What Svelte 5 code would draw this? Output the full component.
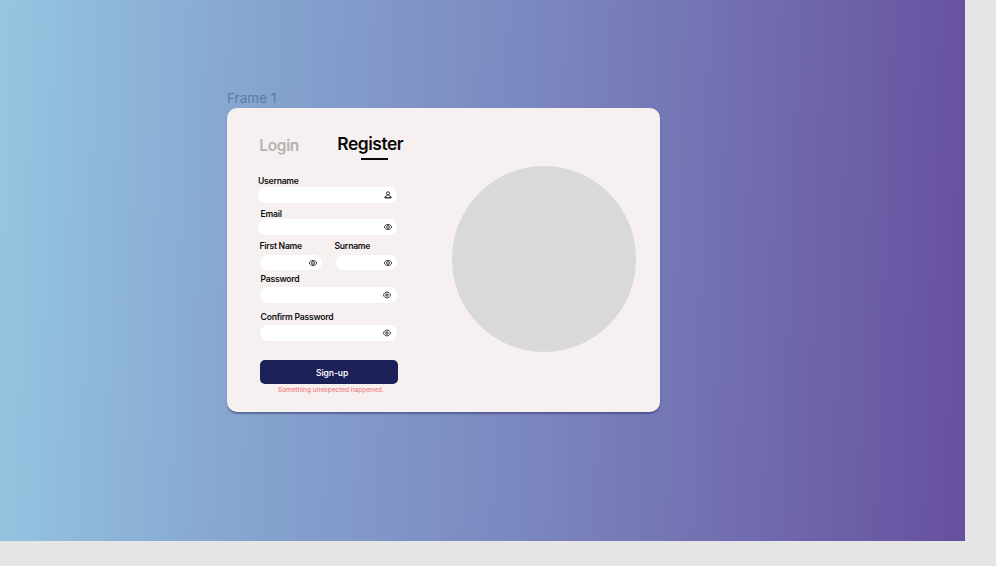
<script>
  const rows = [
    { gap: 0, space: 1, fields: [{ label: 'Username', icon: 'user', indent: 0, left: 0, width: 139 }] },
    { gap: 5, space: 0.5, fields: [{ label: 'Email', icon: 'eye', indent: 2.6, left: 0, width: 139 }] },
    {
      gap: 5, space: 4,
      fields: [
        { label: 'First Name', icon: 'eye', indent: -0.6, left: 2, width: 62 },
        { label: 'Surname', icon: 'eye', indent: -1, left: 13.5, width: 61.5 }
      ]
    },
    { gap: 2.5, space: 3.5, fields: [{ label: 'Password', icon: 'round', indent: 0.6, left: 2, width: 136.8 }] },
    { gap: 8, space: 3.5, fields: [{ label: 'Confirm Password', icon: 'round', indent: 0.6, left: 2, width: 136.8 }] }
  ];
</script>

{#snippet icon(kind)}
  {#if kind === 'user'}
    <svg class="icon" width="8" height="8" viewBox="0 0 8 8">
      <circle cx="4" cy="2.3" r="1.55" />
      <path d="M3.2 3.8v.8L.9 5.7v1.3h6.2V5.7L4.8 4.6v-.8M1 6.5h6" />
    </svg>
  {:else if kind === 'eye'}
    <svg class="icon" width="8" height="8" viewBox="0 0 8 8">
      <path d="M.3 4C1 2.2 2.3 1.5 4 1.5S7 2.2 7.7 4C7 5.8 5.7 6.5 4 6.5S1 5.8.3 4Z" />
      <circle cx="4" cy="4" r="1.4" />
    </svg>
  {:else}
    <svg class="icon" width="8" height="8" viewBox="0 0 8 8">
      <path d="M.5 4C1.1 2 2.5 1.1 4 1.1s2.9.9 3.5 2.9C6.9 6 5.5 6.9 4 6.9S1.1 6 .5 4Z" />
      <circle cx="4" cy="4.1" r="1.2" />
      <path d="M2.6 3 4 4" />
    </svg>
  {/if}
{/snippet}

<div class="workspace">
  <main class="canvas">
    <div class="frame-name">Frame 1</div>
    <section class="card">
      <div class="form">
        <nav>
          <span class="login">Login</span>
          <span class="register">Register</span>
        </nav>
        {#each rows as row}
          <div class="row" style="margin-top:{row.gap}px">
            {#each row.fields as field}
              <div class="field" style="margin-left:{field.left}px;width:{field.width}px">
                <div class="label" style="margin-bottom:{row.space}px;text-indent:{field.indent}px">{field.label}</div>
                <div class="input">{@render icon(field.icon)}</div>
              </div>
            {/each}
          </div>
        {/each}
        <button>Sign-up</button>
        <div class="error">Something unexpected happened.</div>
      </div>
      <div class="circle"></div>
    </section>
  </main>
</div>

<style>
  :global(body) { margin: 0; }
  .workspace {
    width: 996px;
    height: 566px;
    overflow: hidden;
    background: #e5e5e5;
    font-family: Inter, "Liberation Sans", sans-serif;
  }
  .canvas {
    box-sizing: border-box;
    width: 965px;
    height: 541.4px;
    padding: 90px 0 0 227px;
    background: linear-gradient(92deg, #95c6e1 0%, #87a7d1 24%, #7b87bf 55%, #7474b4 71%, #67509f 100%);
  }
  .frame-name {
    height: 17.7px;
    line-height: 17px;
    font-size: 13.4px;
    letter-spacing: .1px;
    color: #5c79a2;
  }
  .card {
    box-sizing: border-box;
    display: flex;
    width: 433px;
    height: 304px;
    padding-left: 31px;
    border-radius: 10px;
    background: #f6f0f0;
    box-shadow: 0 1.5px 1.5px rgba(40, 40, 90, .45);
  }
  .form { width: 141px; white-space: nowrap; }
  nav {
    display: flex;
    height: 67.8px;
    box-sizing: border-box;
    padding-top: 26px;
  }
  .login {
    flex: none;
    width: 78px;
    padding-left: 1.3px;
    font-size: 15.5px;
    font-weight: 600;
    line-height: 23.5px;
    letter-spacing: -.35px;
    color: #b5b2b3;
  }
  .register {
    display: flex;
    flex-direction: column;
    font-size: 17.4px;
    font-weight: 600;
    line-height: 20px;
    letter-spacing: -.46px;
    color: #090909;
  }
  .register::after {
    content: "";
    width: 27px;
    height: 2px;
    margin: 4px 0 0 24px;
    background: #090909;
  }
  .row { display: flex; }
  .field { flex: none; }
  .label {
    height: 11px;
    font-size: 8.6px;
    font-weight: 600;
    line-height: 12.6px;
    letter-spacing: -.24px;
    color: #111;
  }
  .input {
    display: flex;
    align-items: center;
    justify-content: flex-end;
    box-sizing: border-box;
    height: 15.5px;
    padding-right: 5.5px;
    border-radius: 8px;
    background: #fff;
  }
  .icon { fill: none; stroke: #3c3c3c; stroke-width: 1; }
  button {
    display: block;
    box-sizing: border-box;
    width: 138.2px;
    height: 24px;
    margin: 19px 0 0 2px;
    padding: 1.6px 0 0 6px;
    border: 0;
    border-radius: 5px;
    background: #1c2157;
    color: #f4f4fa;
    font: 600 8.5px/22.4px Inter, sans-serif;
    letter-spacing: -.1px;
  }
  .error {
    padding-left: 20px;
    font-size: 6.6px;
    line-height: 12px;
    letter-spacing: -.05px;
    color: #ee6c6c;
  }
  .circle {
    width: 184.5px;
    height: 186px;
    margin: 58.5px 0 0 52.5px;
    border-radius: 50%;
    background: #d9d9d9;
  }
</style>
